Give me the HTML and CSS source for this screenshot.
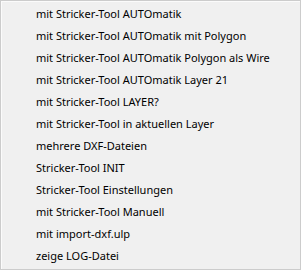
FILE: index.html
```html
<!DOCTYPE html>
<html lang="de">
  <head>
    <meta charset="utf-8">
    <title>Stricker-Tool Menü</title>
    <link rel="stylesheet" href="styles.css">
  </head>
  <body>
    <ul class="menu" role="menu">
      <li class="menu-item" role="menuitem">mit Stricker-Tool AUTOmatik</li>
      <li class="menu-item" role="menuitem">mit Stricker-Tool AUTOmatik mit Polygon</li>
      <li class="menu-item" role="menuitem">mit Stricker-Tool AUTOmatik Polygon als Wire</li>
      <li class="menu-item" role="menuitem">mit Stricker-Tool AUTOmatik Layer 21</li>
      <li class="menu-item" role="menuitem">mit Stricker-Tool LAYER?</li>
      <li class="menu-item" role="menuitem">mit Stricker-Tool in aktuellen Layer</li>
      <li class="menu-item" role="menuitem">mehrere DXF-Dateien</li>
      <li class="menu-item" role="menuitem">Stricker-Tool INIT</li>
      <li class="menu-item" role="menuitem">Stricker-Tool Einstellungen</li>
      <li class="menu-item" role="menuitem">mit Stricker-Tool Manuell</li>
      <li class="menu-item" role="menuitem">mit import-dxf.ulp</li>
      <li class="menu-item" role="menuitem">zeige LOG-Datei</li>
    </ul>
  </body>
</html>
```

FILE: styles.css
```css
html {
  box-sizing: border-box;
}

*,
*:before,
*:after {
  box-sizing: inherit;
}

body {
  margin: 0;
  background: #f0f0f0;
  font-family: "Noto Sans", "Open Sans", sans-serif;
}

.menu {
  list-style: none;
  margin: 0;
  padding: 2px 0 0;
  width: 301px;
  height: 270px;
  background: #f0f0f0;
  border: 1px solid #cccccc;
  box-shadow: inset 1px 1px 0 #fbfbfb;
}

.menu-item {
  height: 22px;
  line-height: 22px;
  padding-left: 35px;
  font-size: 11px;
  color: #000;
  white-space: nowrap;
}
```
